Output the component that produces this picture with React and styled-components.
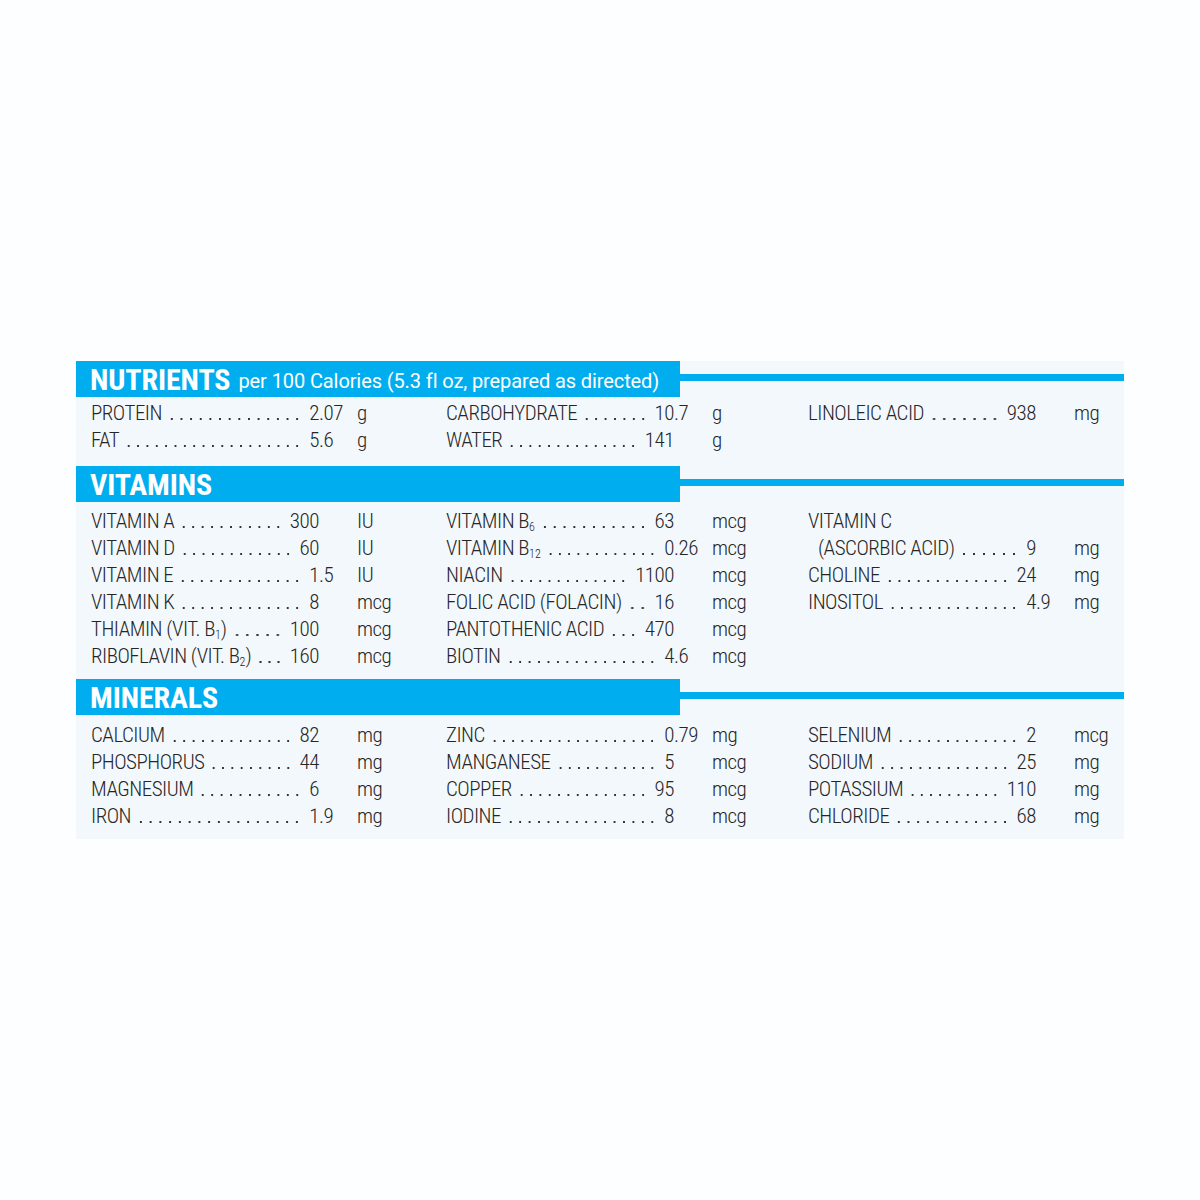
import styled, { createGlobalStyle } from 'styled-components';

const GlobalStyle = createGlobalStyle`
    body {
        margin: 0;
        background: #fdfeff;
        font-family: Roboto, "Liberation Sans", Arial, sans-serif;
        font-stretch: 75%;
    }
`;

const Sub = styled.sub`
    font-size: 12px;
    line-height: 0;
    vertical-align: -3px;
    letter-spacing: 0;
`;

const sections = [
    {
        title: 'NUTRIENTS',
        note: 'per 100 Calories (5.3 fl oz, prepared as directed)',
        padTop: 3,
        padBottom: 12,
        columns: [
            [
                { label: 'PROTEIN', int: '2', frac: '.07', unit: 'g' },
                { label: 'FAT', int: '5', frac: '.6', unit: 'g' },
            ],
            [
                { label: 'CARBOHYDRATE', int: '10', frac: '.7', unit: 'g' },
                { label: 'WATER', int: '141', unit: 'g' },
            ],
            [
                { label: 'LINOLEIC ACID', int: '938', unit: 'mg' },
            ],
        ],
    },
    {
        title: 'VITAMINS',
        padTop: 6,
        padBottom: 9,
        columns: [
            [
                { label: 'VITAMIN A', int: '300', unit: 'IU' },
                { label: 'VITAMIN D', int: '60', unit: 'IU' },
                { label: 'VITAMIN E', int: '1', frac: '.5', unit: 'IU' },
                { label: 'VITAMIN K', int: '8', unit: 'mcg' },
                { label: <>THIAMIN (VIT. B<Sub>1</Sub>)</>, int: '100', unit: 'mcg' },
                { label: <>RIBOFLAVIN (VIT. B<Sub>2</Sub>)</>, int: '160', unit: 'mcg' },
            ],
            [
                { label: <>VITAMIN B<Sub>6</Sub></>, int: '63', unit: 'mcg' },
                { label: <>VITAMIN B<Sub>12</Sub></>, int: '0', frac: '.26', unit: 'mcg' },
                { label: 'NIACIN', int: '1100', unit: 'mcg' },
                { label: 'FOLIC ACID (FOLACIN)', int: '16', unit: 'mcg' },
                { label: 'PANTOTHENIC ACID', int: '470', unit: 'mcg' },
                { label: 'BIOTIN', int: '4', frac: '.6', unit: 'mcg' },
            ],
            [
                { label: 'VITAMIN C', heading: true },
                { label: '(ASCORBIC ACID)', indent: true, int: '9', unit: 'mg' },
                { label: 'CHOLINE', int: '24', unit: 'mg' },
                { label: 'INOSITOL', int: '4', frac: '.9', unit: 'mg' },
            ],
        ],
    },
    {
        title: 'MINERALS',
        padTop: 7,
        padBottom: 9,
        columns: [
            [
                { label: 'CALCIUM', int: '82', unit: 'mg' },
                { label: 'PHOSPHORUS', int: '44', unit: 'mg' },
                { label: 'MAGNESIUM', int: '6', unit: 'mg' },
                { label: 'IRON', int: '1', frac: '.9', unit: 'mg' },
            ],
            [
                { label: 'ZINC', int: '0', frac: '.79', unit: 'mg' },
                { label: 'MANGANESE', int: '5', unit: 'mcg' },
                { label: 'COPPER', int: '95', unit: 'mcg' },
                { label: 'IODINE', int: '8', unit: 'mcg' },
            ],
            [
                { label: 'SELENIUM', int: '2', unit: 'mcg' },
                { label: 'SODIUM', int: '25', unit: 'mg' },
                { label: 'POTASSIUM', int: '110', unit: 'mg' },
                { label: 'CHLORIDE', int: '68', unit: 'mg' },
            ],
        ],
    },
];

export default function App() {
    return (
        <Page>
            <GlobalStyle />
            <Panel>
                {sections.map(s => (
                    <section key={s.title}>
                        <Header>
                            <Bar>
                                <Title>{s.title}</Title>
                                {s.note && <Note>{s.note}</Note>}
                            </Bar>
                            <Rule />
                        </Header>
                        <Body $top={s.padTop} $bottom={s.padBottom}>
                            {s.columns.map((col, i) => (
                                <Column key={i}>
                                    {col.map((r, j) => r.heading ? (
                                        <Row key={j}><Label>{r.label}</Label></Row>
                                    ) : (
                                        <Row key={j}>
                                            <Lead $indent={r.indent}>
                                                <Label>{r.label}</Label>
                                                <Leader />
                                                <Int>{r.int}</Int>
                                            </Lead>
                                            <Frac>{r.frac}</Frac>
                                            <Unit>{r.unit}</Unit>
                                        </Row>
                                    ))}
                                </Column>
                            ))}
                        </Body>
                    </section>
                ))}
            </Panel>
        </Page>
    );
}

const Page = styled.div`
    min-height: 1200px;
    display: flex;
    align-items: center;
    justify-content: center;
`;

const Panel = styled.div`
    width: 1048px;
    background: #f3f8fc;
    color: #262626;
`;

const Header = styled.div`
    display: flex;
    align-items: flex-start;
    height: 36px;
`;

const Bar = styled.div`
    width: 604px;
    height: 36px;
    background: #00aeef;
    color: #fff;
    display: flex;
    align-items: center;
    padding-left: 14px;
    box-sizing: border-box;
    white-space: nowrap;
`;

const Title = styled.span`
    font-size: 30px;
    font-weight: bold;
    letter-spacing: -0.1px;
`;

const Note = styled.span`
    font-size: 20px;
    font-stretch: 100%;
    letter-spacing: -0.1px;
    margin-left: 8px;
    margin-top: 4px;
`;

const Rule = styled.div`
    flex: 1;
    height: 7px;
    margin-top: 13px;
    background: #00aeef;
`;

const Body = styled.div`
    display: grid;
    grid-template-columns: 355px 362px 1fr;
    padding: ${p => p.$top}px 0 ${p => p.$bottom}px 15px;
`;

const Column = styled.div`
    display: flex;
    flex-direction: column;
`;

const Row = styled.div`
    display: flex;
    height: 27px;
    line-height: 27px;
    font-size: 21px;
    font-weight: 300;
    letter-spacing: -0.5px;
    white-space: nowrap;
`;

const Lead = styled.div`
    width: ${p => p.$indent ? 218 : 228}px;
    margin-left: ${p => p.$indent ? 10 : 0}px;
    display: flex;
`;

const Label = styled.span``;

const Leader = styled.span`
    flex: 1;
    margin: 0 7px 0 5px;
    background-image: radial-gradient(circle, #333 0.9px, transparent 1.4px);
    background-size: 9.5px 4px;
    background-repeat: round no-repeat;
    background-position: left bottom 6px;
`;

const Int = styled.span`
    text-align: right;
`;

const Frac = styled.span`
    width: 38px;
`;

const Unit = styled.span``;
